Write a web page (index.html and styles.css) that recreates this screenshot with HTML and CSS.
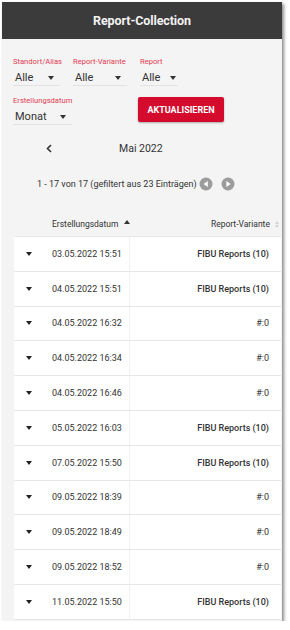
FILE: index.html
```html
<!DOCTYPE html>
<html lang="de">
<head>
    <meta charset="UTF-8">
    <meta name="viewport" content="width=device-width, initial-scale=1.0">
    <title>Report-Collection</title>
    <link rel="stylesheet" href="styles.css">
</head>
<body>
    <div class="app">
        <header class="topbar">Report-Collection</header>

        <section class="filters">
            <div class="filter-row">
                <div class="field w-standort">
                    <label>Standort/Alias</label>
                    <div class="select"><span>Alle</span><i class="caret"></i></div>
                </div>
                <div class="field w-variante">
                    <label>Report-Variante</label>
                    <div class="select"><span>Alle</span><i class="caret"></i></div>
                </div>
                <div class="field w-report">
                    <label>Report</label>
                    <div class="select"><span>Alle</span><i class="caret"></i></div>
                </div>
            </div>
            <div class="filter-row second">
                <div class="field w-datum">
                    <label>Erstellungsdatum</label>
                    <div class="select"><span>Monat</span><i class="caret"></i></div>
                </div>
                <button class="btn-refresh">AKTUALISIEREN</button>
            </div>
        </section>

        <div class="month-nav">
            <svg class="chev" width="6" height="9" viewBox="0 0 6 9"><path d="M5 1 L1.5 4.5 L5 8" fill="none" stroke="#333" stroke-width="1.6"/></svg>
            <span class="month">Mai 2022</span>
        </div>

        <div class="pager">
            <span>1 - 17 von 17 (gefiltert aus 23 Einträgen)</span>
            <svg width="14" height="14" viewBox="0 0 14 14"><circle cx="7" cy="7" r="6.5" fill="#9c9c9c"/><path d="M8.8 4 L4.6 7 L8.8 10 Z" fill="#fff"/></svg>
            <svg width="14" height="14" viewBox="0 0 14 14"><circle cx="7" cy="7" r="6.5" fill="#9c9c9c"/><path d="M5.4 4 L9.6 7 L5.4 10 Z" fill="#fff"/></svg>
        </div>

        <table class="reports">
            <thead>
                <tr>
                    <th class="c-toggle"></th>
                    <th class="c-date">Erstellungsdatum <span class="sort-up"></span></th>
                    <th class="c-variant">Report-Variante <span class="sort-both"><i></i><i></i></span></th>
                </tr>
            </thead>
            <tbody>
                <tr><td class="c-toggle"><i class="row-caret"></i></td><td class="c-date">03.05.2022 15:51</td><td class="c-variant fibu">FIBU Reports (10)</td></tr>
                <tr><td class="c-toggle"><i class="row-caret"></i></td><td class="c-date">04.05.2022 15:51</td><td class="c-variant fibu">FIBU Reports (10)</td></tr>
                <tr><td class="c-toggle"><i class="row-caret"></i></td><td class="c-date">04.05.2022 16:32</td><td class="c-variant">#:0</td></tr>
                <tr><td class="c-toggle"><i class="row-caret"></i></td><td class="c-date">04.05.2022 16:34</td><td class="c-variant">#:0</td></tr>
                <tr><td class="c-toggle"><i class="row-caret"></i></td><td class="c-date">04.05.2022 16:46</td><td class="c-variant">#:0</td></tr>
                <tr><td class="c-toggle"><i class="row-caret"></i></td><td class="c-date">05.05.2022 16:03</td><td class="c-variant fibu">FIBU Reports (10)</td></tr>
                <tr><td class="c-toggle"><i class="row-caret"></i></td><td class="c-date">07.05.2022 15:50</td><td class="c-variant fibu">FIBU Reports (10)</td></tr>
                <tr><td class="c-toggle"><i class="row-caret"></i></td><td class="c-date">09.05.2022 18:39</td><td class="c-variant">#:0</td></tr>
                <tr><td class="c-toggle"><i class="row-caret"></i></td><td class="c-date">09.05.2022 18:49</td><td class="c-variant">#:0</td></tr>
                <tr><td class="c-toggle"><i class="row-caret"></i></td><td class="c-date">09.05.2022 18:52</td><td class="c-variant">#:0</td></tr>
                <tr><td class="c-toggle"><i class="row-caret"></i></td><td class="c-date">11.05.2022 15:50</td><td class="c-variant fibu">FIBU Reports (10)</td></tr>
            </tbody>
        </table>
    </div>
</body>
</html>
```

FILE: styles.css
```css
body {
    margin: 0;
    background-color: #ffffff;
    font-family: Roboto, "Liberation Sans", Arial, sans-serif;
    color: #333;
}

.app {
    width: 280px;
    height: 619px;
    margin: 2px 0 0 2px;
    background-color: #f4f4f4;
    box-shadow: 2px 2px 3px rgba(0, 0, 0, 0.45);
    overflow: hidden;
}

.topbar {
    height: 37px;
    line-height: 37px;
    background-color: #3b3b3b;
    color: #f2f2f2;
    text-align: center;
    font-size: 12.5px;
    font-weight: 700;
    letter-spacing: -0.1px;
}

/* filter block */
.filters {
    padding: 18px 0 0 11px;
}

.filter-row {
    display: flex;
    gap: 13px;
}

.filter-row.second {
    margin-top: 10px;
}

.field label {
    display: block;
    height: 10px;
    line-height: 10px;
    font-size: 7.6px;
    color: #e23a52;
    white-space: nowrap;
}

.select {
    display: flex;
    align-items: center;
    justify-content: space-between;
    height: 16px;
    margin-top: 2px;
    padding: 0 6px 0 2px;
    border-bottom: 1px solid #e2e2e2;
    font-size: 11px;
    color: #333;
}

.caret {
    width: 0;
    height: 0;
    border-left: 3.5px solid transparent;
    border-right: 3.5px solid transparent;
    border-top: 4px solid #333;
    margin-top: 1px;
}

.w-standort { width: 47px; }
.w-variante { width: 54px; }
.w-report { width: 38px; }
.w-report .select { padding-right: 2px; }
.w-datum { width: 59px; }

.btn-refresh {
    margin: 1px 0 0 53px;
    width: 86px;
    height: 25px;
    border: none;
    border-radius: 2px;
    background-color: #d50b2e;
    color: #fff;
    font-family: Roboto, "Liberation Sans", sans-serif;
    font-size: 9px;
    font-weight: 700;
    box-shadow: 0 1px 2px rgba(0, 0, 0, 0.3);
    padding: 0;
}

/* month + paging */
.month-nav {
    display: flex;
    align-items: center;
    height: 16px;
    margin-top: 15px;
    padding-left: 44px;
}

.month {
    margin-left: 67px;
    font-size: 10.5px;
    color: #333;
}

.pager {
    display: flex;
    align-items: center;
    gap: 8px;
    height: 14px;
    margin-top: 21px;
    padding-left: 35px;
    font-size: 9px;
    color: #333;
}

.pager span {
    margin-right: -6px;
}

/* table */
.reports {
    width: 267px;
    margin: 21px 0 0 12px;
    border-collapse: collapse;
    font-size: 9px;
}

.reports th {
    height: 24px;
    padding: 0;
    font-weight: 400;
    font-size: 8.5px;
    color: #333;
    text-align: left;
    border-bottom: 1px solid #e8e8e8;
}

.reports td {
    height: 33.8px;
    padding: 0;
    background-color: #fff;
    border-bottom: 1px solid #e6e6e6;
}

.c-toggle { width: 38px; }

.c-date {
    width: 76px;
    white-space: nowrap;
}

.reports td.c-date { border-right: 1px solid #f0f0f0; }

.reports .c-variant {
    text-align: right;
    padding-right: 12px;
    white-space: nowrap;
}

.reports th.c-variant { padding-right: 2px; }

.fibu { font-weight: 500; }

.row-caret {
    display: block;
    width: 0;
    height: 0;
    margin-left: 12px;
    border-left: 3px solid transparent;
    border-right: 3px solid transparent;
    border-top: 4px solid #222;
}

.sort-up {
    display: inline-block;
    width: 0;
    height: 0;
    margin-left: 3px;
    vertical-align: 3px;
    border-left: 3px solid transparent;
    border-right: 3px solid transparent;
    border-bottom: 4px solid #333;
}

.sort-both {
    display: inline-flex;
    flex-direction: column;
    gap: 1px;
    margin-left: 3px;
    vertical-align: middle;
}

.sort-both i {
    width: 0;
    height: 0;
    border-left: 2.5px solid transparent;
    border-right: 2.5px solid transparent;
    border-bottom: 3.5px solid #d4d4d4;
}

.sort-both i + i {
    border-bottom: none;
    border-top: 3.5px solid #d4d4d4;
}
```
